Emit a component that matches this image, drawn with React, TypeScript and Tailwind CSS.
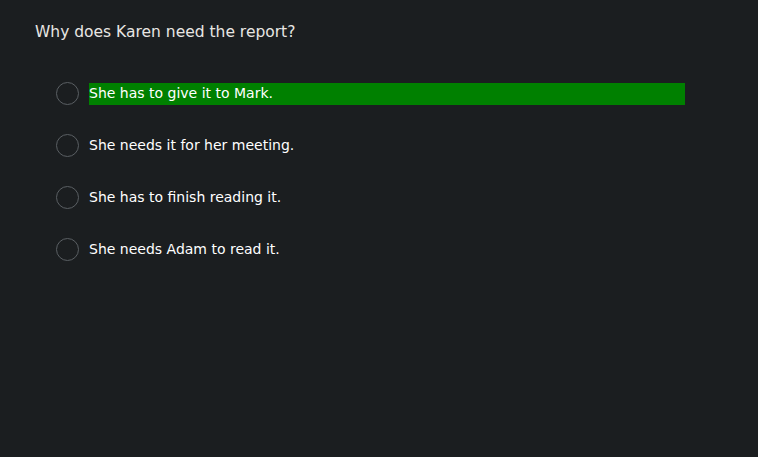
import React from 'react';

const options = [
  { text: 'She has to give it to Mark.', correct: true },
  { text: 'She needs it for her meeting.', correct: false },
  { text: 'She has to finish reading it.', correct: false },
  { text: 'She needs Adam to read it.', correct: false },
];

export default function App() {
  return (
    <div
      className="w-[758px] h-[457px] bg-[#1b1e20] text-[#e8e6e3] pl-[35px] pt-[22px]"
      style={{ fontFamily: '"DejaVu Sans", Verdana, sans-serif' }}
    >
      <p className="text-[15.5px] leading-[20px]">Why does Karen need the report?</p>

      <ul className="mt-[40px] flex flex-col gap-[29px] pl-[21px]">
        {options.map((opt) => (
          <li key={opt.text} className="flex items-center gap-[10px] h-[23px]">
            <span className="w-[23px] h-[23px] rounded-full border border-[#5a5f63] shrink-0" />
            <span
              className={
                'w-[596px] h-[22px] flex items-center text-[14px] text-white ' +
                (opt.correct ? 'bg-[#008000]' : '')
              }
            >
              {opt.text}
            </span>
          </li>
        ))}
      </ul>
    </div>
  );
}
